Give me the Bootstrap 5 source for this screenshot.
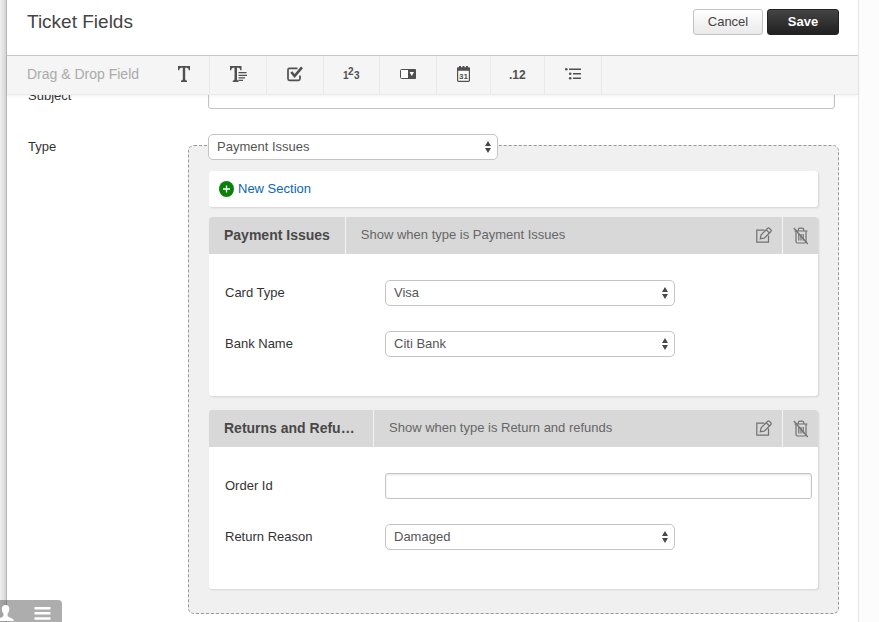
<!DOCTYPE html>
<html lang="en">
<head>
<meta charset="utf-8">
<meta name="viewport" content="width=device-width, initial-scale=1">
<title>Ticket Fields</title>
<link href="https://cdn.jsdelivr.net/npm/bootstrap@5.3.0/dist/css/bootstrap.min.css" rel="stylesheet">
<style>
body{font-family:"Liberation Sans",Arial,sans-serif;font-size:13px;line-height:18px;color:#333;background:#fcfcfc}
.edge{width:6px;background:linear-gradient(90deg,#f0f0f0,#d4d4d4)}
.panel{border-left:1px solid #b4b4b4;border-right:1px solid #e6e6e6;margin-right:20px;min-width:0}
.page-head{height:55px;padding:9px 19px 0 20px}
.page-title{font-size:19px;line-height:26px;color:#444;font-weight:400}
.btn-act{font-size:13px;line-height:18px;padding:3px 0;height:26px;border-radius:3px}
.btn-cancel{width:70px;border-color:#c2c2c2;background:linear-gradient(#fff,#e9e9e9);color:#444}
.btn-save{width:72px;border-color:#222;background:linear-gradient(#444,#202020);color:#fff}
.tools{position:relative;z-index:2;height:40px;background:#f5f5f5;border-top:1px solid #c8c8c8;border-bottom:1px solid #eaeaea;box-shadow:0 1px 3px rgba(0,0,0,.05)}
.tools-label{width:151px;padding-left:20px;padding-bottom:2px;font-size:14px;color:#aaa}
.tool{width:57px;border:0;border-right:1px solid #e9e9e9;border-radius:0;background:none;color:#505050;padding:0 0 2px}
.tool-first{width:52px}
.tool-mid{width:56px}
.tool-slim{width:54px}
.fields{padding:0 19px 8px 21px;margin-top:-12px}
.field-label{width:160px;padding-top:4px;flex:none;color:#333}
.form-control.fld,.form-select.fld{height:26px;font-size:13px;line-height:18px;padding:3px 8px;border:1px solid #c4c4c4;color:#555;background-color:#fff}
.form-control.fld{border-radius:3px;box-shadow:inset 0 1px 2px rgba(0,0,0,.12)}
.form-select.fld{width:290px;max-width:100%;border-radius:5px;background-image:url("data:image/svg+xml,%3Csvg xmlns='http://www.w3.org/2000/svg' viewBox='0 0 6 12'%3E%3Cpath fill='%23484848' d='M3 0 6 5H0zM3 12 6 7H0z'/%3E%3C/svg%3E");background-size:6px 12px;background-position:right 6px center}
.subject-box{margin-left:20px;margin-right:4px}
.type-row{margin-top:25px}
.zone{border:1px dashed #999;border-radius:6px;background:#f0f0f0;padding:0 20px 24px 19px;margin-top:11px;min-width:0}
.zone-pick{margin-top:-12px;margin-bottom:11px}
.tile{margin-left:1px;background:#fff;border-radius:3px;box-shadow:1px 1px 2px rgba(0,0,0,.12)}
.tile-new{height:36px;padding:0 10px;margin-bottom:10px}
.new-link{color:#0a66b7;text-decoration:none}
.sect + .sect{margin-top:14px}
.sect-head{height:37px;background:#d8d8d8;border-radius:3px 3px 0 0}
.sect-name{font-size:14px;font-weight:bold;color:#484848;padding:0 15px;max-width:165px;border-right:1px solid #f4f4f4;line-height:37px;margin:0}
.sect-rule{color:#666;padding:0 0 2px 15px}
.btn-ico{width:36px;border:0;border-radius:0;padding:0 0 2px;color:#707070}
.btn-trash{border-left:1px solid #f4f4f4;padding-bottom:0}
.sect-body{padding:26px 6px 39px 16px;display:grid;gap:25px}
.dock{position:fixed;left:0;bottom:0;z-index:5;width:62px;height:22px;background:rgba(80,80,80,.47);border-radius:0 4px 0 0;color:#fff}
.dock .btn{padding:0;border:0;border-radius:0;color:#fff}
.dock-user{width:14px}
.dock-menu{width:17px;margin-left:20px}
svg{display:block}
</style>
<script src="https://cdn.jsdelivr.net/npm/bootstrap@5.3.0/dist/js/bootstrap.bundle.min.js"></script>
</head>
<body>
<svg class="d-none" aria-hidden="true">
  <symbol id="i-edit" viewBox="0 0 16 16"><g fill="none" stroke="currentColor" stroke-width="1.2"><path d="M8.500 3.200H.8v12h11.700V8.500"/><path d="M4.300 11.800l.8-3.900 6.600-6.600q.8-.7 1.600 0l1.600 1.600q.7.8 0 1.600L8.300 11.100zM10.300 2.800l3.200 3.200"/></g></symbol>
  <symbol id="i-trash" viewBox="0 0 16 18"><g fill="none" stroke="currentColor" stroke-width="1.200"><path d="M1.500 4h13M5.200 4V2.800Q5.300 1.200 7 1.200h2q1.700 0 1.800 1.600V4M3 4v10.500q0 1.500 1.500 1.500h7q1.500 0 1.500-1.500V4M5.800 7v6.500M8 7v6.500M10.200 7v6.500"/><path d="M.8 1l14 16"/></g></symbol>
</svg>
<div class="d-flex min-vh-100">
  <div class="edge flex-shrink-0"></div>
  <main class="panel bg-white flex-grow-1">
    <header class="page-head d-flex justify-content-between align-items-start">
      <h1 class="page-title mb-0">Ticket Fields</h1>
      <div class="d-flex gap-1">
        <button type="button" class="btn btn-act btn-cancel">Cancel</button>
        <button type="button" class="btn btn-act btn-save fw-bold">Save</button>
      </div>
    </header>
    <div class="tools d-flex" role="toolbar" aria-label="Drag and drop field">
      <div class="tools-label d-flex align-items-center text-nowrap">Drag &amp; Drop Field</div>
      <button type="button" class="btn tool tool-first d-flex align-items-center justify-content-center" aria-label="Text">
        <svg width="12" height="16" viewBox="0 0 12 16" fill="currentColor"><path d="M0 0h12v4.200h-1.200Q10.600 1.800 9 1.700H7.200v11.500q0 1.200 1.800 1.300V16H3v-1.500q1.800-.1 1.800-1.300V1.700H3Q1.400 1.800 1.200 4.200H0z"/></svg>
      </button>
      <button type="button" class="btn tool d-flex align-items-center justify-content-center" aria-label="Paragraph">
        <svg width="17" height="16" viewBox="0 0 17 16" fill="currentColor"><path d="M0 0h11.500v4.200h-1.200Q10.200 1.700 8.500 1.700H7v11.500q0 1.200 1.500 1.300V16H2.800v-1.500q1.700-.1 1.700-1.300V1.700H3Q1.300 1.700 1.200 4.200H0z"/><path d="M8.500 6h8v1.200h-8zM8.500 8.700h8.500v1.200H8.500zM8.500 11.300h6.500v1.200H8.500zM8.500 13.800h4.500V15H8.500z"/></svg>
      </button>
      <button type="button" class="btn tool d-flex align-items-center justify-content-center" aria-label="Checkbox">
        <svg width="16" height="16" viewBox="0 0 16 16" fill="none" stroke="currentColor"><path stroke-width="1.700" d="M10.500 2.300H2.500Q1 2.300 1 3.800v9Q1 14.300 2.500 14.300h9q1.500 0 1.500-1.500V9.500"/><path stroke-width="2.600" d="M4.300 6l3.300 4L15 1.300"/></svg>
      </button>
      <button type="button" class="btn tool tool-mid d-flex align-items-center justify-content-center" aria-label="Number">
        <svg width="17" height="14" viewBox="0 0 17 14" fill="currentColor" font-family="Liberation Sans, sans-serif" font-size="10" font-weight="bold"><text x="0" y="12">1</text><text x="5" y="8">2</text><text x="11" y="12">3</text></svg>
      </button>
      <button type="button" class="btn tool d-flex align-items-center justify-content-center" aria-label="Dropdown">
        <svg width="16" height="10" viewBox="0 0 16 10"><rect x=".5" y=".5" width="15" height="9" rx="1" fill="#fff" stroke="currentColor"/><path fill="currentColor" d="M8 0h7q1 0 1 1v8q0 1-1 1H8z"/><path fill="#fff" d="M9.500 3h4.500l-2.200 4z"/></svg>
      </button>
      <button type="button" class="btn tool tool-slim d-flex align-items-center justify-content-center" aria-label="Date">
        <svg width="13" height="16" viewBox="0 0 13 16"><rect x=".6" y="2" width="11.800" height="13.300" rx="1" fill="#fafafa" stroke="currentColor" stroke-width="1.200"/><path fill="currentColor" d="M0 1.500h2V0h2v1.500h1.500V0h2v1.500H9V0h2v1.500h2v3.200H0z"/><text x="6.500" y="13" text-anchor="middle" font-family="Liberation Sans, sans-serif" font-weight="bold" font-size="8" fill="currentColor">31</text></svg>
      </button>
      <button type="button" class="btn tool tool-slim d-flex align-items-center justify-content-center" aria-label="Decimal">
        <svg width="17" height="14" viewBox="0 0 17 14" fill="currentColor"><text x="0" y="12" font-family="Liberation Sans, sans-serif" font-size="12" font-weight="bold">.12</text></svg>
      </button>
      <button type="button" class="btn tool d-flex align-items-center justify-content-center" aria-label="Dependent field">
        <svg width="16" height="12" viewBox="0 0 16 12" fill="currentColor"><circle cx="1.300" cy="1.300" r="1.300"/><circle cx="5.200" cy="5.700" r="1.300"/><circle cx="5.200" cy="10.300" r="1.300"/><path d="M4 .5h12V2H4zM8 5h8v1.500H8zM8 9.600h8v1.500H8z"/></svg>
      </button>
    </div>

    <form class="fields">
      <div class="d-flex">
        <label class="field-label" for="subject">Subject</label>
        <div class="subject-box flex-grow-1"><input id="subject" type="text" class="form-control fld"></div>
      </div>
      <div class="type-row d-flex">
        <label class="field-label" for="type">Type</label>
        <div class="zone flex-grow-1">
          <div class="zone-pick"><select id="type" class="form-select fld"><option>Payment Issues</option><option>Return and refunds</option></select></div>
          <div class="tile tile-new d-flex align-items-center">
            <a href="#" class="new-link d-flex align-items-center gap-1">
              <svg width="15" height="16" viewBox="0 0 15 16"><ellipse cx="7.500" cy="8" rx="7.500" ry="8" fill="#0a820a"/><path d="M4 8h7M7.500 4.500v7" stroke="#fff" stroke-width="1.300"/></svg>
              New Section</a>
          </div>

          <section class="tile sect">
            <div class="sect-head d-flex align-items-stretch">
              <h2 class="sect-name text-truncate">Payment Issues</h2>
              <div class="sect-rule flex-grow-1 d-flex align-items-center">Show when type is Payment Issues</div>
              <button type="button" class="btn btn-ico d-flex align-items-center justify-content-center" aria-label="Edit section"><svg width="16" height="16"><use href="#i-edit"/></svg></button>
              <button type="button" class="btn btn-ico btn-trash d-flex align-items-center justify-content-center" aria-label="Delete section"><svg width="16" height="18"><use href="#i-trash"/></svg></button>
            </div>
            <div class="sect-body">
              <div class="d-flex"><label class="field-label" for="card-type">Card Type</label><select id="card-type" class="form-select fld"><option>Visa</option></select></div>
              <div class="d-flex"><label class="field-label" for="bank">Bank Name</label><select id="bank" class="form-select fld"><option>Citi Bank</option></select></div>
            </div>
          </section>

          <section class="tile sect">
            <div class="sect-head d-flex align-items-stretch">
              <h2 class="sect-name text-truncate">Returns and Refunds</h2>
              <div class="sect-rule flex-grow-1 d-flex align-items-center">Show when type is Return and refunds</div>
              <button type="button" class="btn btn-ico d-flex align-items-center justify-content-center" aria-label="Edit section"><svg width="16" height="16"><use href="#i-edit"/></svg></button>
              <button type="button" class="btn btn-ico btn-trash d-flex align-items-center justify-content-center" aria-label="Delete section"><svg width="16" height="18"><use href="#i-trash"/></svg></button>
            </div>
            <div class="sect-body">
              <div class="d-flex"><label class="field-label" for="order">Order Id</label><input id="order" type="text" class="form-control fld"></div>
              <div class="d-flex"><label class="field-label" for="reason">Return Reason</label><select id="reason" class="form-select fld"><option>Damaged</option></select></div>
            </div>
          </section>
        </div>
      </div>
    </form>
  </main>
</div>
<div class="dock d-flex align-items-end">
  <button type="button" class="btn dock-user" aria-label="Contacts"><svg width="14" height="17" viewBox="0 0 14 17" fill="currentColor"><path d="M5.500 0Q9.500 0 9.300 4.500 9 7.500 7.600 8.500v2.300Q8 12 11 13q3 .8 3 3H0v-3q3-1 3.400-2.200V8.500Q2 7.500 1.800 4.500 1.600 0 5.500 0z"/></svg></button>
  <button type="button" class="btn dock-menu" aria-label="Menu"><svg width="17" height="16" viewBox="0 0 17 16" fill="currentColor"><path d="M.5 1H16.500v2.500H.5zM.5 6H16.500v2.500H.5zM.5 11.200H16.500v2.500H.5z"/></svg></button>
</div>
</body>
</html>
